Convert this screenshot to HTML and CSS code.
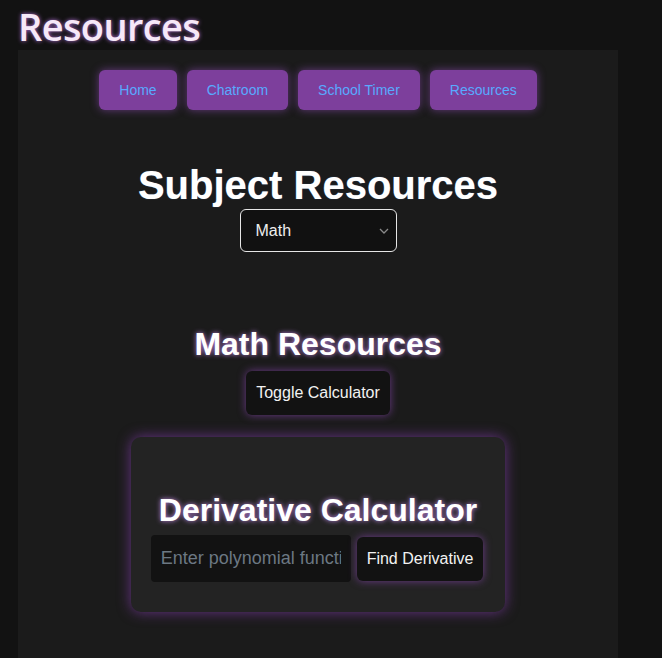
FILE: index.html
```html
<!DOCTYPE html>
<html lang="en">
<head>
<meta charset="utf-8">
<title>Resources</title>
<link rel="stylesheet" href="styles.css">
</head>
<body>
<h1 class="page-title">Resources</h1>
<main class="container">
  <nav class="nav">
    <a class="nav-btn" href="#">Home</a>
    <a class="nav-btn" href="#">Chatroom</a>
    <a class="nav-btn" href="#">School Timer</a>
    <a class="nav-btn" href="#">Resources</a>
  </nav>
  <h2 class="subject-title">Subject Resources</h2>
  <div class="select-wrap">
    <select class="subject-select">
      <option>Math</option>
      <option>Science</option>
      <option>English</option>
    </select>
    <svg class="chevron" width="10" height="6" viewBox="0 0 10 6"><path d="M1 1l4 4 4-4" fill="none" stroke="#8a8a8a" stroke-width="1.3"/></svg>
  </div>
  <h2 class="math-title">Math Resources</h2>
  <button class="dark-btn toggle-btn">Toggle Calculator</button>
  <section class="calc-card">
    <h2 class="calc-title">Derivative Calculator</h2>
    <div class="calc-row">
      <input class="calc-input" type="text" placeholder="Enter polynomial function">
      <button class="dark-btn find-btn">Find Derivative</button>
    </div>
  </section>
</main>
</body>
</html>
```

FILE: styles.css
```css
html, body {
  margin: 0;
  padding: 0;
}
body {
  background: #121212;
  color: #fff;
  font-family: "Liberation Sans", Arial, sans-serif;
  padding: 0 18px;
  height: 658px;
  overflow: hidden;
  display: flex;
  flex-direction: column;
}
.page-title {
  font-family: "Open Sans", sans-serif;
  font-weight: 600;
  font-size: 38px;
  line-height: 47px;
  padding-top: 3px;
  margin: 0;
  color: #f6e8f8;
  text-shadow: 0 0 4px rgba(190, 120, 230, 0.9);
  letter-spacing: -0.6px;
  white-space: nowrap;
}
.container {
  width: 600px;
  flex: 1;
  background: #1b1b1b;
  display: flex;
  flex-direction: column;
  align-items: center;
  padding-top: 20px;
  box-sizing: border-box;
}
.nav {
  display: flex;
  gap: 10px;
}
.nav-btn {
  background: #7d3f9c;
  color: #58aaff;
  font-size: 14px;
  line-height: 16px;
  padding: 12px 20px;
  border-radius: 6px;
  text-decoration: none;
  box-shadow: 0 0 8px rgba(150, 80, 190, 0.6);
}
.subject-title {
  font-size: 40px;
  line-height: 46px;
  font-weight: 700;
  margin: 52px 0 1px;
  color: #fff;
  text-shadow: 0 0 1px rgba(120, 180, 255, 0.6);
}
.select-wrap {
  position: relative;
}
.subject-select {
  appearance: none;
  -webkit-appearance: none;
  width: 157px;
  height: 43px;
  background: #111;
  color: #eee;
  border: 1px solid #e6e6e6;
  border-radius: 6px;
  font-family: "Liberation Sans", Arial, sans-serif;
  font-size: 16px;
  padding: 0 15px;
  display: block;
}
.chevron {
  position: absolute;
  right: 8px;
  top: 19px;
}
.math-title {
  font-size: 32px;
  line-height: 37px;
  font-weight: 700;
  margin: 74px 0 8px;
  color: #fff;
  text-shadow: 0 0 5px rgba(200, 140, 240, 0.9);
}
.dark-btn {
  background: #121212;
  color: #f2f2f2;
  border: none;
  border-radius: 6px;
  font-family: "Liberation Sans", Arial, sans-serif;
  font-size: 16px;
  padding: 0 10px;
  white-space: nowrap;
  box-shadow: 0 0 8px rgba(140, 70, 180, 0.7);
}
.toggle-btn {
  height: 44px;
}
.calc-card {
  margin-top: 22px;
  width: 374px;
  box-sizing: border-box;
  background: #232323;
  border-radius: 10px;
  padding: 55px 21px 30px 19px;
  box-shadow: 0 0 14px rgba(130, 60, 170, 0.75);
  display: flex;
  flex-direction: column;
  align-items: center;
}
.calc-title {
  font-size: 32px;
  line-height: 37px;
  font-weight: 700;
  margin: 0 0 6px 2px;
  color: #fff;
  text-shadow: 0 0 5px rgba(200, 140, 240, 0.9);
}
.calc-row {
  display: flex;
  align-items: center;
  gap: 6px;
}
.calc-input {
  width: 200px;
  height: 47px;
  box-sizing: border-box;
  background: #121212;
  border: none;
  border-radius: 4px;
  padding: 0 10px;
  font-family: "Liberation Sans", Arial, sans-serif;
  font-size: 18px;
  color: #eee;
}
.calc-input::placeholder {
  color: #6c7883;
}
.find-btn {
  height: 44px;
}
```
